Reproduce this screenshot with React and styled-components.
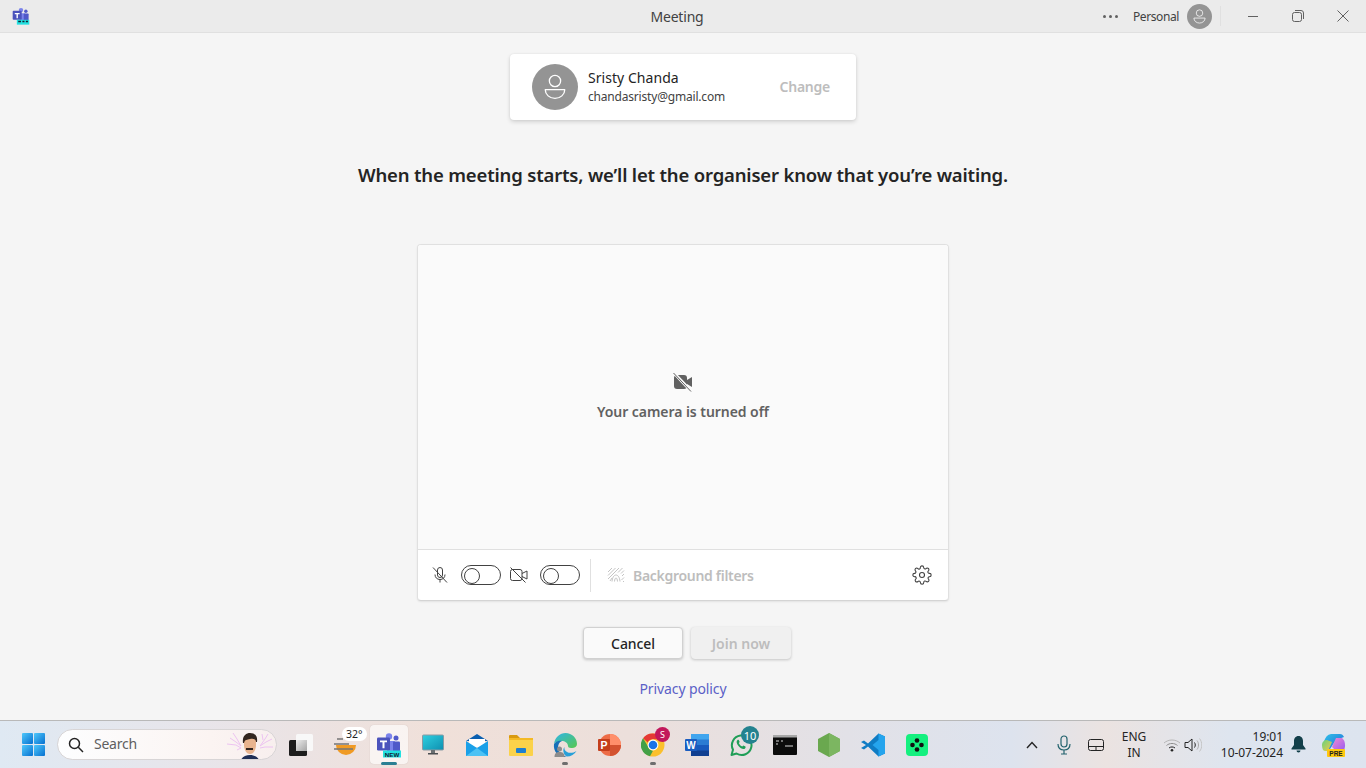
import React from "react";
import styled, { createGlobalStyle } from "styled-components";

const GlobalStyle = createGlobalStyle`
  html, body {
    margin: 0;
    padding: 0;
    height: 100%;
    overflow: hidden;
  }
  body {
    font-family: "Noto Sans", "Open Sans", "Liberation Sans", sans-serif;
    color: #242424;
    background: #f5f5f5;
  }
`;

const Page = styled.div`
  display: flex;
  flex-direction: column;
  width: 1366px;
  height: 768px;
`;

/* title bar */
const TitleBar = styled.header`
  display: flex;
  align-items: center;
  height: 32px;
  flex: none;
  background: #ebebeb;
  border-bottom: 1px solid #e0e0e0;
`;

const TitleLeft = styled.div`
  display: flex;
  align-items: center;
  width: 640px;
  padding-left: 12px;
  box-sizing: border-box;
`;

const Title = styled.div`
  width: 74px;
  text-align: center;
  font-size: 14px;
  letter-spacing: -0.2px;
  color: #424242;
  white-space: nowrap;
`;

const TitleRight = styled.div`
  flex: 1;
  display: flex;
  align-items: center;
  justify-content: flex-end;
  padding-right: 1px;
`;

const MoreDots = styled.div`
  display: flex;
  gap: 3px;
  margin-right: 15px;
`;

const Dot = styled.span`
  width: 3px;
  height: 3px;
  border-radius: 50%;
  background: #616161;
`;

const AccountName = styled.span`
  font-size: 12px;
  letter-spacing: -0.4px;
  color: #424242;
  margin-right: 8px;
`;

const TitleAvatar = styled.div`
  width: 25px;
  height: 25px;
  border-radius: 50%;
  background: #949494;
  display: flex;
  align-items: center;
  justify-content: center;
`;

const TitleDivider = styled.div`
  width: 1px;
  height: 20px;
  background: #e0e0e0;
  margin: 0 9px 0 8px;
`;

const WindowButton = styled.button`
  width: 45px;
  height: 32px;
  padding: 0;
  border: 0;
  background: transparent;
  display: flex;
  align-items: center;
  justify-content: center;
`;

/* main area */
const Main = styled.main`
  flex: 1;
  display: flex;
  flex-direction: column;
  align-items: center;
  padding-top: 21px;
`;

const AccountCard = styled.section`
  width: 346px;
  height: 66px;
  box-sizing: border-box;
  padding: 0 26px 0 22px;
  background: #fff;
  border-radius: 4px;
  box-shadow: 0 2px 4px rgba(0, 0, 0, 0.14), 0 0 2px rgba(0, 0, 0, 0.08);
  display: flex;
  align-items: center;
`;

const CardAvatar = styled.div`
  width: 46px;
  height: 46px;
  flex: none;
  border-radius: 50%;
  background: #949494;
  display: flex;
  align-items: center;
  justify-content: center;
  margin-right: 10px;
`;

const CardText = styled.div`
  flex: 1;
  display: flex;
  flex-direction: column;
  gap: 1px;
  margin-top: -2px;
`;

const CardName = styled.div`
  font-size: 14px;
  line-height: 20px;
  letter-spacing: 0.05px;
  color: #242424;
`;

const CardEmail = styled.div`
  font-size: 12px;
  line-height: 16px;
  letter-spacing: -0.19px;
  color: #424242;
`;

const ChangeLink = styled.span`
  font-size: 14px;
  font-weight: 600;
  letter-spacing: -0.25px;
  color: #bdbdbd;
  margin-top: -2px;
`;

const Heading = styled.h1`
  margin: 41px 0 0;
  height: 27px;
  line-height: 27px;
  font-size: 18.5px;
  font-weight: 600;
  letter-spacing: -0.175px;
  color: #242424;
  white-space: nowrap;
`;

const PreviewPanel = styled.section`
  width: 532px;
  height: 357px;
  margin-top: 56px;
  box-sizing: border-box;
  border: 1px solid #e0e0e0;
  border-bottom-color: #d4d4d4;
  border-radius: 4px;
  background: #fff;
  box-shadow: 0 1px 2px rgba(0, 0, 0, 0.08);
  display: flex;
  flex-direction: column;
  overflow: hidden;
`;

const VideoArea = styled.div`
  flex: 1;
  background: #fafafa;
  border-bottom: 1px solid #e0e0e0;
  display: flex;
  flex-direction: column;
  align-items: center;
  padding-top: 127px;
  box-sizing: border-box;
`;

const CameraOffText = styled.div`
  margin-top: 10px;
  font-size: 14px;
  line-height: 20px;
  font-weight: 600;
  letter-spacing: -0.05px;
  color: #616161;
`;

const ControlBar = styled.div`
  height: 50px;
  flex: none;
  display: flex;
  align-items: center;
  padding: 0 16px 0 12px;
`;

const ControlIcon = styled.div`
  width: 20px;
  height: 20px;
  display: flex;
  align-items: center;
  justify-content: center;
  margin-right: ${({ $gap }) => $gap || 0}px;
`;

const Toggle = styled.div`
  width: 40px;
  height: 20px;
  box-sizing: border-box;
  border: 1px solid #424242;
  border-radius: 10px;
  padding: 2px;
  margin-right: ${({ $gap }) => $gap || 0}px;
`;

const Knob = styled.div`
  width: 14px;
  height: 14px;
  border: 1px solid #424242;
  border-radius: 50%;
`;

const ControlDivider = styled.div`
  width: 1px;
  height: 33px;
  background: #e0e0e0;
  margin: 0 16px 0 10px;
`;

const FilterLabel = styled.span`
  flex: 1;
  margin-left: 8px;
  font-size: 14px;
  font-weight: 600;
  letter-spacing: -0.3px;
  color: #bdbdbd;
`;

const ButtonRow = styled.div`
  display: flex;
  gap: 8px;
  margin-top: 26px;
  margin-left: 8px;
`;

const ActionButton = styled.button`
  width: 100px;
  height: 32px;
  padding: 0;
  box-sizing: border-box;
  font-family: inherit;
  font-size: 14px;
  font-weight: ${({ disabled }) => (disabled ? 600 : 500)};
  letter-spacing: ${({ disabled }) => (disabled ? "0" : "-0.1px")};
  border-radius: 4px;
  color: ${({ disabled }) => (disabled ? "#bdbdbd" : "#242424")};
  background: ${({ disabled }) => (disabled ? "#f0f0f0" : "#fafafa")};
  border: 1px solid ${({ disabled }) => (disabled ? "#f0f0f0" : "#d1d1d1")};
  box-shadow: 0 1px 3px rgba(0, 0, 0, 0.2);
`;

const PrivacyLink = styled.a`
  margin-top: 20px;
  font-size: 14px;
  line-height: 20px;
  letter-spacing: -0.1px;
  color: #5b5fc7;
`;

/* taskbar */
const Taskbar = styled.footer`
  height: 48px;
  flex: none;
  box-sizing: border-box;
  border-top: 1px solid #b9b9b9;
  padding: 0 11px;
  display: flex;
  align-items: center;
  justify-content: space-between;
  background: linear-gradient(
    90deg,
    #dfe9f3 0%,
    #e8e5ea 15%,
    #f0e0d9 32%,
    #ecdfdb 46%,
    #e2e1e7 62%,
    #dde3ee 74%,
    #ebe3e1 81%,
    #dee5ef 90%,
    #dde4ef 100%
  );
`;

const TaskGroup = styled.div`
  display: flex;
  align-items: center;
`;

const TaskSlot = styled.div`
  position: relative;
  width: 44px;
  height: 47px;
  display: flex;
  align-items: center;
  justify-content: center;

  svg {
    position: relative;
  }
`;

const ActiveTile = styled.div`
  position: absolute;
  left: 3px;
  right: 3px;
  top: 4px;
  bottom: 4px;
  border-radius: 4px;
  background: rgba(255, 255, 255, 0.62);
  box-shadow: 0 0 1px rgba(0, 0, 0, 0.2);
`;

const RunPip = styled.div`
  position: absolute;
  bottom: 3px;
  left: 50%;
  transform: translateX(-50%);
  width: ${({ $wide }) => ($wide ? 16 : 6)}px;
  height: 3px;
  border-radius: 2px;
  background: ${({ $wide }) => ($wide ? "#2a7f93" : "#6e6e6e")};
`;

const Badge = styled.div`
  position: absolute;
  top: ${({ $top }) => $top}px;
  left: ${({ $left }) => $left}px;
  width: ${({ $size }) => $size}px;
  height: ${({ $size }) => $size}px;
  border-radius: 50%;
  background: ${({ $bg }) => $bg};
  color: #fff;
  font-size: ${({ $font }) => $font}px;
  display: flex;
  align-items: center;
  justify-content: center;
`;

const TempBubble = styled.div`
  position: absolute;
  top: 6px;
  left: 19px;
  height: 14px;
  padding: 0 4px;
  border-radius: 7px;
  background: #fff;
  color: #242424;
  font-size: 10.5px;
  line-height: 14px;
`;

const SearchBox = styled.div`
  width: 220px;
  height: 31px;
  margin: 0 2px;
  box-sizing: border-box;
  border-radius: 16px;
  border: 1px solid #d8d5d6;
  background: linear-gradient(90deg, #fdfeff, #fbf4f2 70%, #f8efee);
  display: flex;
  align-items: center;
  padding-left: 10px;
  overflow: hidden;
`;

const SearchLabel = styled.span`
  flex: 1;
  margin: -2px 0 0 10px;
  font-size: 14px;
  letter-spacing: -0.25px;
  color: #5f5f5f;
`;

const TrayCell = styled.div`
  width: ${({ $w }) => $w}px;
  margin-left: ${({ $ml }) => $ml || 0}px;
  height: 47px;
  display: flex;
  align-items: center;
  justify-content: center;
`;

const TrayText = styled.div`
  font-size: 12px;
  line-height: 16px;
  letter-spacing: -0.05px;
  color: #242424;
  text-align: ${({ $align }) => $align || "center"};
  width: 100%;
  white-space: nowrap;
`;

/* drawings */
const PersonIcon = ({ size, color = "#fff", stroke = 1.2 }) => (
  <svg width={size} height={size} viewBox="0 0 24 24" fill="none" stroke={color} strokeWidth={stroke}>
    <circle cx="12" cy="6.500" r="5.200" />
    <path d="M3 14.500h18c0 4.500-4 8-9 8s-9-3.500-9-8z" strokeLinejoin="round" />
  </svg>
);

const TeamsLogo = ({ size, label }) => (
  <svg width={size} height={size} viewBox="0 0 26 26">
    <circle cx="13" cy="4.500" r="3.200" fill="#7b83eb" />
    <circle cx="20" cy="6" r="2.500" fill="#5059c9" />
    <rect x="11" y="9" width="8" height="11" rx="1" fill="#7b83eb" />
    <rect x="17" y="9.500" width="7" height="10" rx="1" fill="#5059c9" />
    <rect x="1" y="5.500" width="13" height="13" rx="1.200" fill="#4b53bc" />
    <path d="M4 8.500h7v1.800H8.500v6H6.500v-6H4z" fill="#fff" />
    <rect x="7" y="18.500" width="18" height="7" fill="#22e0e0" />
    {label ? (
      <text x="16" y="24.500" fontSize="6.200" fontWeight="700" textAnchor="middle" fill="#123" fontFamily="Liberation Sans">
        NEW
      </text>
    ) : (
      <path d="M9 21h4M15 21h3M20 21h3" stroke="#123" strokeWidth="2" />
    )}
  </svg>
);

const CloseGlyph = () => (
  <svg width="12" height="12" viewBox="0 0 12 12" stroke="#616161" strokeWidth="1" fill="none">
    <path d="M.5.5l11 11M11.500.5l-11 11" />
  </svg>
);

const RestoreGlyph = () => (
  <svg width="12" height="12" viewBox="0 0 12 12" stroke="#616161" fill="none">
    <rect x=".5" y="2.500" width="9" height="9" rx="2" />
    <path d="M3 .5h6a2.500 2.500 0 0 1 2.500 2.500v6" />
  </svg>
);

const MinimizeGlyph = () => (
  <svg width="12" height="12" viewBox="0 0 12 12" stroke="#616161" fill="none">
    <path d="M1 6.500h10" />
  </svg>
);

const CameraOffSolid = () => (
  <svg width="22" height="20" viewBox="0 0 22 20">
    <rect x="2" y="3" width="13" height="14" rx="3" fill="#616161" />
    <path d="M15 8l5-3v10l-5-3z" fill="#616161" />
    <path d="M2 1l17 18" stroke="#fafafa" strokeWidth="3" />
    <path d="M1.500 1l17.500 18.500" stroke="#616161" strokeWidth="1" />
  </svg>
);

const MicOffOutline = () => (
  <svg width="18" height="18" viewBox="0 0 18 18" fill="none" stroke="#424242" strokeWidth="1">
    <rect x="6.500" y="1.500" width="5" height="10" rx="2.500" />
    <path d="M4 8.500c0 3 2 5 5 5s5-2 5-5M9 13.500v3" />
    <path d="M2 1.500l14 15" />
  </svg>
);

const CamOffOutline = () => (
  <svg width="20" height="18" viewBox="0 0 20 18" fill="none" stroke="#424242" strokeWidth="1">
    <rect x="1.500" y="3.500" width="11.500" height="11" rx="2" />
    <path d="M13 7.500l5-2.500v8l-5-2.500" />
    <path d="M1.500 1.500l15 15" />
  </svg>
);

const FilterIcon = () => (
  <svg width="18" height="16" viewBox="0 0 18 16" fill="none" stroke="#c4c4c4" strokeWidth="1">
    <path d="M1 5l4-4M1 8.500L8.500 1M1 12L12 1M15.500 1L11 5.500M17 3.500l-3 3M17 7l-2 2M17 10.500l-2.500 2.500M3 14l2-3M17 14l-1 1" />
    <path d="M5 14.500c.3-4 2-6.500 4-6.500s3.700 2.500 4 6.500" />
    <path d="M7.500 14.500c.2-2.200.7-3.500 1.500-3.500s1.300 1.300 1.500 3.500" />
  </svg>
);

const GearIcon = () => (
  <svg width="20" height="20" viewBox="0 0 24 24" fill="none" stroke="#424242" strokeWidth="1.300" strokeLinejoin="round">
    <circle cx="12" cy="12" r="3" />
    <path d="M19.400 15a1.650 1.650 0 0 0 .33 1.820l.06.06a2 2 0 1 1-2.830 2.830l-.06-.06a1.650 1.650 0 0 0-2.800 1.170V21a2 2 0 1 1-4 0v-.09a1.650 1.650 0 0 0-2.800-1.170l-.06.06a2 2 0 1 1-2.830-2.830l.06-.06A1.650 1.650 0 0 0 3.090 14H3a2 2 0 1 1 0-4h.09a1.650 1.650 0 0 0 1.170-2.800l-.06-.06a2 2 0 1 1 2.830-2.830l.06.06A1.650 1.650 0 0 0 10 3.090V3a2 2 0 1 1 4 0v.09a1.650 1.650 0 0 0 2.800 1.170l.06-.06a2 2 0 1 1 2.830 2.830l-.06.06A1.650 1.650 0 0 0 20.910 10H21a2 2 0 1 1 0 4h-.09a1.650 1.650 0 0 0-1.510 1z" />
  </svg>
);

const StartLogo = () => (
  <svg width="23" height="23" viewBox="0 0 23 23">
    <defs>
      <linearGradient id="startBlue" x1="0" y1="0" x2="1" y2="1">
        <stop offset="0" stopColor="#4fc8fb" />
        <stop offset="1" stopColor="#0670d0" />
      </linearGradient>
    </defs>
    <rect x="0" y="0" width="11" height="11" rx="1" fill="url(#startBlue)" />
    <rect x="12" y="0" width="11" height="11" rx="1" fill="url(#startBlue)" />
    <rect x="0" y="12" width="11" height="11" rx="1" fill="url(#startBlue)" />
    <rect x="12" y="12" width="11" height="11" rx="1" fill="url(#startBlue)" />
  </svg>
);

const SearchGlyph = () => (
  <svg width="16" height="16" viewBox="0 0 16 16" fill="none" stroke="#242424" strokeWidth="1.500">
    <circle cx="6.500" cy="6.500" r="5" />
    <path d="M10.300 10.300L15 15" />
  </svg>
);

const SearchArt = () => (
  <svg width="52" height="30" viewBox="0 0 52 30" fill="none">
    <path d="M6 8l6 4 5 4M3 14l9 1 5 3M9 3l4 6 4 7M13 20l4-2M44 4l-3 5-5 7M48 9l-6 3-6 4M49 17l-8 0-5 1M38 4l1 6" stroke="#ecc2f0" strokeWidth="1" />
    <path d="M17 30c1-3 5-5 9-5s8 2 9 5z" fill="#1f2f55" />
    <path d="M20 9c1-4 11-5 12 1v5c0 4-2 9-6 9s-6-5-6-9z" fill="#e8b48e" />
    <path d="M19 13c-1-7 3-10 7-10s8 2 7 9l-1 0c0-3-3-4-6-3s-5 0-6 4z" fill="#33261f" />
    <path d="M22 18h7v2h-7z" fill="#33261f" />
  </svg>
);

const TaskViewIcon = () => (
  <svg width="24" height="22" viewBox="0 0 24 22">
    <defs>
      <linearGradient id="taskOverlap" x1="0" y1="0" x2="1" y2="1">
        <stop offset="0" stopColor="#ececec" />
        <stop offset="1" stopColor="#a4a4a4" />
      </linearGradient>
    </defs>
    <rect x="7" y="0" width="17" height="17" rx="1.500" fill="#f8f8f8" />
    <rect x="0" y="6" width="18" height="16" rx="1.500" fill="#1d1d1d" />
    <rect x="7" y="6" width="11" height="11" fill="url(#taskOverlap)" />
  </svg>
);

const WeatherIcon = () => (
  <svg width="24" height="24" viewBox="0 0 24 24">
    <path d="M3 12h20a10 10 0 0 1-20 0z" fill="#f09a24" />
    <path d="M4 6h6M1 11h15M1 16h19" stroke="#767676" strokeWidth="1.600" />
  </svg>
);

const MonitorIcon = () => (
  <svg width="22" height="22" viewBox="0 0 22 22">
    <defs>
      <linearGradient id="monScreen" x1="0" y1="0" x2="1" y2="1">
        <stop offset="0" stopColor="#2fd0e0" />
        <stop offset="1" stopColor="#0e8fb0" />
      </linearGradient>
    </defs>
    <rect x="0.500" y="1" width="21" height="15" rx="1" fill="url(#monScreen)" stroke="#8a9aa3" />
    <rect x="9" y="16" width="4" height="3" fill="#6a6f72" />
    <rect x="6" y="19" width="10" height="1.500" fill="#4b4f52" />
  </svg>
);

const MailIcon = () => (
  <svg width="24" height="24" viewBox="0 0 24 24">
    <path d="M12 1L1 8h22z" fill="#0a5fb0" />
    <path d="M4 6h16v8H4z" fill="#fff" />
    <path d="M1 8l11 7 11-7v15H1z" fill="#1aa0e8" />
    <path d="M1 23l11-8 11 8z" fill="#4cc2f4" />
  </svg>
);

const FolderIcon = () => (
  <svg width="24" height="22" viewBox="0 0 24 22">
    <path d="M0 2a1 1 0 0 1 1-1h7l3 3h-11z" fill="#d99a10" />
    <rect x="0" y="4" width="24" height="18" rx="1" fill="#fbd24a" />
    <rect x="0" y="4" width="24" height="2" fill="#f4b924" />
    <rect x="7" y="14" width="10" height="5" rx="1" fill="#1e7fd0" />
  </svg>
);

const EdgeIcon = () => (
  <svg width="24" height="24" viewBox="0 0 24 24">
    <defs>
      <linearGradient id="edgeTop" x1="0" y1="0" x2="1" y2="1">
        <stop offset="0" stopColor="#2fb5e8" />
        <stop offset="1" stopColor="#58c84e" />
      </linearGradient>
    </defs>
    <path d="M1 11C2 4 7 0 12.500 0 19 0 24 5 24 11c0 3-3 4.500-6 4-2 0-3-1-3-2 0-3-3-5-6.500-5C5 8 2 9 1 11z" fill="url(#edgeTop)" />
    <path d="M1 11c2-3 5-4 8-3-3 1-4 4-4 7 0 4 4 8 9 8.500-1 .3-2 .5-2.500.5C5 24 0 18 1 11z" fill="#1670b8" />
    <path d="M14 23.500c4 0 7.500-2 9.500-5.500-3 2-7 2.500-9.500 1-2-1-3-3-2.500-5-2 2-1.500 8 2.500 9.500z" fill="#28a0d8" />
    <circle cx="6.500" cy="16" r="2.500" fill="#8c8c8c" />
    <path d="M1.500 24c0-4 2-5 5-5s5 1 5 5z" fill="#8c8c8c" />
  </svg>
);

const PowerPointIcon = () => (
  <svg width="24" height="24" viewBox="0 0 24 24">
    <circle cx="13" cy="12" r="11" fill="#ed6c47" />
    <path d="M13 1a11 11 0 0 1 11 11H13z" fill="#ff8f6b" />
    <path d="M13 12h11a11 11 0 0 1-11 11z" fill="#d35230" />
    <rect x="1" y="6" width="12" height="12" rx="1" fill="#c43e1c" />
    <text x="7" y="16" fontSize="10.500" fontWeight="700" textAnchor="middle" fill="#fff" fontFamily="Liberation Sans">
      P
    </text>
  </svg>
);

const ChromeIcon = () => (
  <svg width="24" height="24" viewBox="0 0 24 24">
    <circle cx="12" cy="12" r="11.500" fill="#fbc02d" />
    <path d="M12 .5a11.500 11.500 0 0 1 10 5.750H12a5.750 5.750 0 0 0-5.200 3.300L2 5.200A11.500 11.500 0 0 1 12 .5z" fill="#e53935" />
    <path d="M2 5.200l5 8.300a5.750 5.750 0 0 0 5 4.250L9 23.200A11.500 11.500 0 0 1 2 5.200z" fill="#43a047" />
    <circle cx="12" cy="12" r="5.400" fill="#fff" />
    <circle cx="12" cy="12" r="4.300" fill="#1a73e8" />
  </svg>
);

const WordIcon = () => (
  <svg width="24" height="22" viewBox="0 0 24 22">
    <rect x="6" y="0" width="18" height="6" fill="#41a5ee" />
    <rect x="6" y="5.500" width="18" height="6" fill="#2b7cd3" />
    <rect x="6" y="11" width="18" height="6" fill="#185abd" />
    <rect x="6" y="16.500" width="18" height="5.500" fill="#103f91" />
    <rect x="0" y="5" width="12" height="12" rx="1" fill="#1a5dc0" />
    <text x="6" y="15" fontSize="10" fontWeight="700" textAnchor="middle" fill="#fff" fontFamily="Liberation Sans">
      W
    </text>
  </svg>
);

const WhatsAppIcon = () => (
  <svg width="24" height="24" viewBox="0 0 24 24" fill="none">
    <path d="M2.500 22l1.500-5.300A9.800 9.800 0 1 1 7.500 20.500z" stroke="#1f9e57" strokeWidth="2" strokeLinejoin="round" />
    <path d="M8.500 7c-1.500 1-1 3.500 1 6s5 3.800 6.500 2.500c1-1 .7-1.800 0-2.200l-1.700-.8-1 1c-1.500-.5-3-2-3.500-3.500l.9-1-.8-1.800c-.4-.6-.8-.6-1.400-.2z" fill="#1f9e57" />
  </svg>
);

const ConsoleIcon = () => (
  <svg width="24" height="20" viewBox="0 0 24 20">
    <rect x="0" y="0" width="24" height="20" rx="1" fill="#0c0c0c" />
    <rect x="0" y="0" width="24" height="2.500" fill="#a8a8a8" />
    <path d="M3 6h3M3 9h2M8 6h2M12 11h8" stroke="#d8d8d8" strokeWidth="1.200" />
  </svg>
);

const NodeIcon = () => (
  <svg width="22" height="24" viewBox="0 0 22 24">
    <path d="M11 0l11 6v12l-11 6-11-6V6z" fill="#6aa84f" />
    <path d="M11 0l11 6v12l-11 6z" fill="#7cb661" />
  </svg>
);

const VSCodeIcon = () => (
  <svg width="24" height="24" viewBox="0 0 24 24">
    <path d="M17.500 0.500L24 3.500v17l-6.500 3L7 13.500l-4 3L0 15l5-3-5-3 3-1.500 4 3z" fill="#0f7cc4" />
    <path d="M17.500 0.500L24 3.500v17l-6.500 3V17L11.500 12l6-5z" fill="#25a4ed" />
  </svg>
);

const GreenAppIcon = () => (
  <svg width="22" height="22" viewBox="0 0 22 22">
    <rect width="22" height="22" rx="4" fill="#14f07f" />
    <circle cx="11" cy="6.500" r="2.300" fill="#111" />
    <circle cx="6.500" cy="11" r="2.300" fill="#111" />
    <circle cx="15.500" cy="11" r="2.300" fill="#111" />
    <circle cx="11" cy="15.500" r="2.300" fill="#111" />
  </svg>
);

const ChevronUp = () => (
  <svg width="12" height="8" viewBox="0 0 12 8" fill="none" stroke="#242424" strokeWidth="1.400">
    <path d="M1 7l5-5.500L11 7" />
  </svg>
);

const TrayMic = () => (
  <svg width="14" height="20" viewBox="0 0 14 20" fill="none" stroke="#24636e" strokeWidth="1.200">
    <rect x="4" y="1" width="6" height="11" rx="3" />
    <path d="M1 9c0 4 2.500 6 6 6s6-2 6-6M7 15v4M4 19h6" />
  </svg>
);

const TouchpadIcon = () => (
  <svg width="16" height="14" viewBox="0 0 16 14" fill="none" stroke="#242424" strokeWidth="1">
    <rect x=".5" y="1.500" width="15" height="11" rx="2" />
    <path d="M.5 8.500h15M8 8.500v4" />
  </svg>
);

const WifiIcon = () => (
  <svg width="18" height="14" viewBox="0 0 18 14" fill="none">
    <path d="M1 5c4.500-4 11.500-4 16 0" stroke="#b6b6b6" />
    <path d="M3.500 7.500c3-2.700 8-2.700 11 0" stroke="#8f8f8f" />
    <path d="M6 10c1.600-1.400 4.400-1.400 6 0" stroke="#242424" />
    <circle cx="9" cy="12.300" r="1.300" fill="#242424" />
  </svg>
);

const SpeakerIcon = () => (
  <svg width="18" height="16" viewBox="0 0 18 16" fill="none" stroke="#242424" strokeWidth="1">
    <path d="M1 5.500h3L8 2v12L4 10.500H1z" strokeLinejoin="round" />
    <path d="M10.500 5.500c1 1.500 1 3.500 0 5" />
    <path d="M13 3.500c2 2.500 2 6.500 0 9" stroke="#a8a8a8" />
    <path d="M15.500 1.500c3 3.500 3 9.500 0 13" stroke="#c4c4c4" />
  </svg>
);

const BellIcon = () => (
  <svg width="15" height="17" viewBox="0 0 15 17">
    <path d="M7.500 0C4.500 0 3 2.500 3 5v4L.5 12.500v1h14v-1L12 9V5c0-2.500-1.500-5-4.500-5z" fill="#123f4a" />
    <path d="M5.500 14.500h4a2 2 0 0 1-4 0z" fill="#123f4a" />
  </svg>
);

const CopilotIcon = () => (
  <svg width="26" height="26" viewBox="0 0 26 26">
    <defs>
      <linearGradient id="copA" x1="0" y1="0" x2="1" y2="1">
        <stop offset="0" stopColor="#2fc3e8" />
        <stop offset="1" stopColor="#2466d8" />
      </linearGradient>
      <linearGradient id="copB" x1="0" y1="0" x2="1" y2="1">
        <stop offset="0" stopColor="#f08ad0" />
        <stop offset="1" stopColor="#9a5cf0" />
      </linearGradient>
      <linearGradient id="copC" x1="0" y1="0" x2="1" y2="1">
        <stop offset="0" stopColor="#66d27a" />
        <stop offset="1" stopColor="#f2c94c" />
      </linearGradient>
    </defs>
    <path d="M10 2h9c2 0 3 1 4 3l-8 3-6 9H4C1 14 3 3 10 2z" fill="url(#copA)" />
    <path d="M1 13c0-3 2-5 5-5l5 2-4 9H4c-2 0-3-3-3-6z" fill="url(#copC)" />
    <path d="M15 6h6c3 2 4 8 2 12h-9l-3-3z" fill="url(#copB)" />
    <rect x="6" y="17" width="18" height="8" rx="1" fill="#ffc90e" />
    <text x="15" y="23.500" fontSize="6.500" fontWeight="700" textAnchor="middle" fill="#222" fontFamily="Liberation Sans">
      PRE
    </text>
  </svg>
);

const App = () => {
  return (
    <Page>
      <GlobalStyle />
      <TitleBar>
        <TitleLeft>
          <TeamsLogo size={18} />
        </TitleLeft>
        <Title>Meeting</Title>
        <TitleRight>
          <MoreDots>
            <Dot />
            <Dot />
            <Dot />
          </MoreDots>
          <AccountName>Personal</AccountName>
          <TitleAvatar>
            <PersonIcon size={15} />
          </TitleAvatar>
          <TitleDivider />
          <WindowButton aria-label="Minimize">
            <MinimizeGlyph />
          </WindowButton>
          <WindowButton aria-label="Restore">
            <RestoreGlyph />
          </WindowButton>
          <WindowButton aria-label="Close">
            <CloseGlyph />
          </WindowButton>
        </TitleRight>
      </TitleBar>

      <Main>
        <AccountCard>
          <CardAvatar>
            <PersonIcon size={26} />
          </CardAvatar>
          <CardText>
            <CardName>Sristy Chanda</CardName>
            <CardEmail>chandasristy@gmail.com</CardEmail>
          </CardText>
          <ChangeLink>Change</ChangeLink>
        </AccountCard>

        <Heading>When the meeting starts, we’ll let the organiser know that you’re waiting.</Heading>

        <PreviewPanel>
          <VideoArea>
            <CameraOffSolid />
            <CameraOffText>Your camera is turned off</CameraOffText>
          </VideoArea>
          <ControlBar>
            <ControlIcon $gap={11}>
              <MicOffOutline />
            </ControlIcon>
            <Toggle $gap={8}>
              <Knob />
            </Toggle>
            <ControlIcon $gap={11}>
              <CamOffOutline />
            </ControlIcon>
            <Toggle>
              <Knob />
            </Toggle>
            <ControlDivider />
            <FilterIcon />
            <FilterLabel>Background filters</FilterLabel>
            <GearIcon />
          </ControlBar>
        </PreviewPanel>

        <ButtonRow>
          <ActionButton>Cancel</ActionButton>
          <ActionButton disabled>Join now</ActionButton>
        </ButtonRow>
        <PrivacyLink>Privacy policy</PrivacyLink>
      </Main>

      <Taskbar>
        <TaskGroup>
          <TaskSlot>
            <StartLogo />
          </TaskSlot>
          <SearchBox>
            <SearchGlyph />
            <SearchLabel>Search</SearchLabel>
            <SearchArt />
          </SearchBox>
          <TaskSlot>
            <TaskViewIcon />
          </TaskSlot>
          <TaskSlot>
            <WeatherIcon />
            <TempBubble>32°</TempBubble>
          </TaskSlot>
          <TaskSlot>
            <ActiveTile />
            <TeamsLogo size={26} label />
            <RunPip $wide />
          </TaskSlot>
          <TaskSlot>
            <MonitorIcon />
          </TaskSlot>
          <TaskSlot>
            <MailIcon />
          </TaskSlot>
          <TaskSlot>
            <FolderIcon />
          </TaskSlot>
          <TaskSlot>
            <EdgeIcon />
            <RunPip />
          </TaskSlot>
          <TaskSlot>
            <PowerPointIcon />
          </TaskSlot>
          <TaskSlot>
            <ChromeIcon />
            <Badge $left={24} $top={6} $size={15} $bg="#c2185b" $font={9}>
              S
            </Badge>
            <RunPip />
          </TaskSlot>
          <TaskSlot>
            <WordIcon />
          </TaskSlot>
          <TaskSlot>
            <WhatsAppIcon />
            <Badge $left={22} $top={5} $size={18} $bg="#24828f" $font={11}>
              10
            </Badge>
          </TaskSlot>
          <TaskSlot>
            <ConsoleIcon />
          </TaskSlot>
          <TaskSlot>
            <NodeIcon />
          </TaskSlot>
          <TaskSlot>
            <VSCodeIcon />
          </TaskSlot>
          <TaskSlot>
            <GreenAppIcon />
          </TaskSlot>
        </TaskGroup>

        <TaskGroup>
          <TrayCell $w={32}>
            <ChevronUp />
          </TrayCell>
          <TrayCell $w={32}>
            <TrayMic />
          </TrayCell>
          <TrayCell $w={31}>
            <TouchpadIcon />
          </TrayCell>
          <TrayCell $w={46}>
            <TrayText>
              ENG
              <br />
              IN
            </TrayText>
          </TrayCell>
          <TrayCell $w={22} $ml={4}>
            <WifiIcon />
          </TrayCell>
          <TrayCell $w={20}>
            <SpeakerIcon />
          </TrayCell>
          <TrayCell $w={80}>
            <TrayText $align="right">
              19:01
              <br />
              10-07-2024
            </TrayText>
          </TrayCell>
          <TrayCell $w={30}>
            <BellIcon />
          </TrayCell>
          <TrayCell $w={42}>
            <CopilotIcon />
          </TrayCell>
        </TaskGroup>
      </Taskbar>
    </Page>
  );
};

export default App;
